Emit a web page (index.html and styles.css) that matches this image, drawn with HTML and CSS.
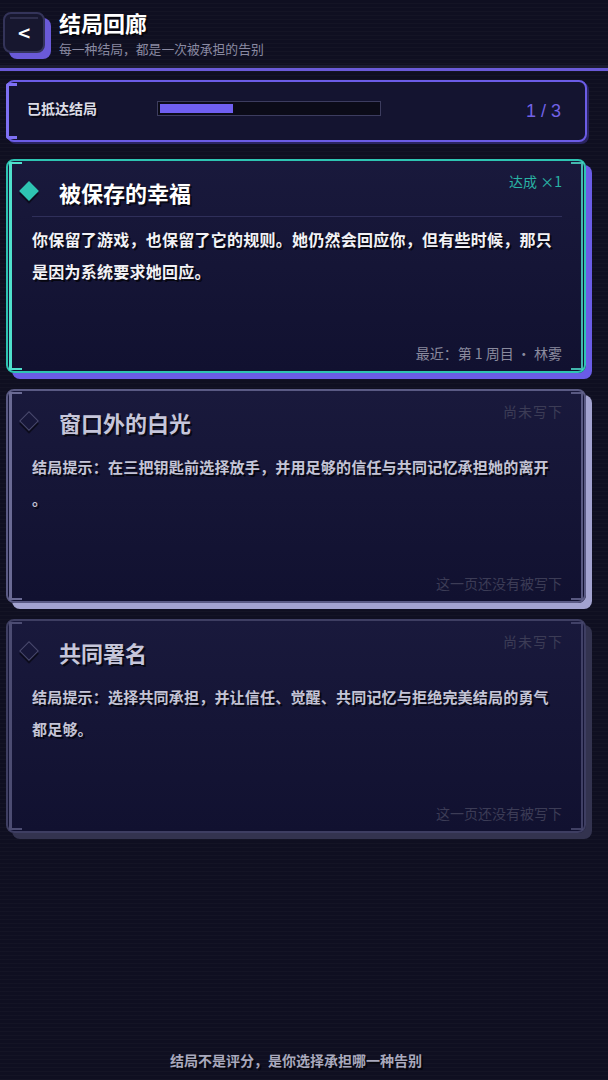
FILE: index.html
```html
<!DOCTYPE html>
<html lang="zh-CN">
<head>
    <meta charset="utf-8">
    <title>结局回廊</title>
    <link rel="stylesheet" href="styles.css">
</head>
<body>
    <div class="page">
        <!-- Top bar -->
        <header class="topbar">
            <button class="back-btn">&lt;</button>
            <div class="titles">
                <h1>结局回廊</h1>
                <p class="subtitle">每一种结局，都是一次被承担的告别</p>
            </div>
        </header>

        <!-- Progress -->
        <div class="progress-card">
            <span class="progress-label">已抵达结局</span>
            <div class="progress-track">
                <div class="progress-fill" style="width: 33.3%;"></div>
            </div>
            <span class="progress-count">1 / 3</span>
        </div>

        <!-- Ending list -->
        <div class="ending-list">
            <div class="ending-card unlocked">
                <div class="card-head">
                    <span class="mark"></span>
                    <h3 class="ending-title">被保存的幸福</h3>
                    <span class="ending-tag">达成 ×1</span>
                </div>
                <div class="divider"></div>
                <p class="ending-text">你保留了游戏，也保留了它的规则。她仍然会回应你，但有些时候，那只是因为系统要求她回应。</p>
                <div class="ending-foot">最近：第 1 周目 · 林雾</div>
            </div>

            <div class="ending-card locked bright">
                <div class="card-head">
                    <span class="mark"></span>
                    <h3 class="ending-title">窗口外的白光</h3>
                    <span class="ending-tag">尚未写下</span>
                </div>
                <p class="ending-text hint">结局提示：在三把钥匙前选择放手，并用足够的信任与共同记忆承担她的离开。</p>
                <div class="ending-foot">这一页还没有被写下</div>
            </div>

            <div class="ending-card locked">
                <div class="card-head">
                    <span class="mark"></span>
                    <h3 class="ending-title">共同署名</h3>
                    <span class="ending-tag">尚未写下</span>
                </div>
                <p class="ending-text hint">结局提示：选择共同承担，并让信任、觉醒、共同记忆与拒绝完美结局的勇气都足够。</p>
                <div class="ending-foot">这一页还没有被写下</div>
            </div>
        </div>

        <p class="page-note">结局不是评分，是你选择承担哪一种告别</p>
    </div>
</body>
</html>
```

FILE: styles.css
```css
body {
    margin: 0;
    background-color: #0f0f21;
    background-image: repeating-linear-gradient(0deg, rgba(255, 255, 255, 0.018) 0 1px, transparent 1px 4px);
    font-family: "Noto Sans CJK SC", "Noto Sans", sans-serif;
    color: #e8e8f0;
}

.page {
    width: 592px;
    height: 1080px;
    display: flex;
    flex-direction: column;
}

/* ---------- top bar ---------- */
.topbar {
    height: 71px;
    flex-shrink: 0;
    box-sizing: border-box;
    padding: 12px 0 0 3px;
    display: flex;
    gap: 14px;
    width: 608px;
    border-bottom: 3px solid #6a5ad8;
    box-shadow: inset 0 -3px 0 #1b1b30;
}

.back-btn {
    width: 42px;
    height: 41px;
    border: 2px solid #34345a;
    border-radius: 8px;
    background: #17172f;
    color: #ffffff;
    font-family: "DejaVu Sans", sans-serif;
    font-size: 17px;
    font-weight: bold;
    padding: 0;
    box-shadow: 6px 6px 0 #6a5ad8;
    position: relative;
}

.back-btn::before {
    content: "";
    position: absolute;
    top: 3px;
    left: 5px;
    right: 5px;
    height: 2px;
    background: #2e2e4c;
}

.titles h1 {
    margin: -3px 0 0 0;
    font-size: 22px;
    line-height: 26px;
    font-weight: bold;
    color: #ffffff;
    text-shadow: 2px 2px 0 rgba(0, 0, 0, 0.6);
}

.subtitle {
    margin: 5px 0 0 0;
    font-size: 12.8px;
    line-height: 18px;
    color: #8a8aa2;
}

/* ---------- progress ---------- */
.progress-card {
    position: relative;
    margin: 9px 5px 0 6px;
    height: 62px;
    flex-shrink: 0;
    box-sizing: border-box;
    border: 2px solid #6b5ce6;
    border-radius: 8px;
    background: #141430;
    display: flex;
    align-items: center;
    padding: 0 24px 6px 19px;
    box-shadow: 2px 2px 0 #2a2460;
}

.progress-card::before {
    content: "";
    position: absolute;
    top: 1px;
    bottom: 1px;
    left: -2px;
    width: 8px;
    border: 3px solid #7e70f4;
    border-right: none;
    border-radius: 3px 0 0 3px;
}

.progress-label {
    width: 130px;
    font-size: 14px;
    font-weight: bold;
    color: #dcdce6;
    text-shadow: 2px 2px 0 rgba(0, 0, 0, 0.6);
}

.progress-track {
    width: 224px;
    height: 15px;
    box-sizing: border-box;
    border: 1px solid #3c3c5e;
    background: #0b0b18;
    padding: 2px;
}

.progress-fill {
    height: 100%;
    background: #6f5ff0;
}

.progress-count {
    margin: 6px 0 0 auto;
    font-family: "Liberation Sans", sans-serif;
    font-size: 18px;
    color: #7262e6;
}

/* ---------- endings ---------- */
.ending-list {
    margin: 17px 0 0 6px;
    display: flex;
    flex-direction: column;
    gap: 16px;
}

.ending-card {
    --line: #2ec4b2;
    --edge: #4fe0cc;
    --shade: #6a5ce6;
    position: relative;
    width: 580px;
    min-height: 214px;
    box-sizing: border-box;
    border: 2px solid var(--line);
    border-radius: 8px;
    background: linear-gradient(180deg, #19193c 0%, #111130 100%);
    box-shadow: 6px 6px 0 var(--shade);
    padding: 10px 22px 8px 12px;
    display: flex;
    flex-direction: column;
}

/* bracket trims inside the frame */
.ending-card::before,
.ending-card::after {
    content: "";
    position: absolute;
    top: 1px;
    bottom: 1px;
    width: 10px;
    border: 2px solid var(--edge);
}

.ending-card::before {
    left: 1px;
    border-right: none;
    border-left-width: 3px;
}

.ending-card::after {
    right: 1px;
    border-left: none;
    opacity: 0.8;
}

.ending-card.locked {
    --line: #3e3e62;
    --edge: #4c4c72;
    --shade: #33334f;
}

.ending-card.locked.bright {
    --line: #5a5a84;
    --edge: #6a6a94;
    --shade: #a3a3d0;
}

.card-head {
    display: flex;
    align-items: flex-start;
}

.mark {
    width: 22px;
    height: 30px;
    margin-top: 6px;
    margin-right: 17px;
    position: relative;
}

.mark::before {
    content: "";
    position: absolute;
    width: 14px;
    height: 14px;
    left: 2px;
    top: 7px;
    transform: rotate(45deg);
    background: #2ec4b2;
    box-shadow: 2px 2px 0 rgba(0, 0, 0, 0.5);
}

.locked .mark::before {
    box-sizing: border-box;
    background: transparent;
    border: 1.5px solid #4a4a6e;
}

.ending-title {
    margin: 6px 0 0 0;
    font-size: 22px;
    line-height: 30px;
    font-weight: bold;
    color: #ffffff;
    text-shadow: 2px 2px 0 rgba(0, 0, 0, 0.65);
}

.locked .ending-title {
    color: #c6c6da;
}

.ending-tag {
    margin-left: auto;
    font-size: 14px;
    line-height: 20px;
    color: #29b3a4;
}

.locked .ending-tag {
    letter-spacing: 1px;
    margin-right: -1px;
    color: #3c3c56;
}

.divider {
    height: 1px;
    margin: 9px 0 0 12px;
    background: #2f2f5a;
}

.ending-text {
    margin: 6px 10px 0 12px;
    font-size: 16px;
    line-height: 32px;
    font-weight: bold;
    letter-spacing: 0.25px;
    color: #f2f2f6;
    text-shadow: 2px 2px 0 rgba(0, 0, 0, 0.7);
}

.ending-text.hint {
    margin-top: 14px;
    font-size: 15px;
    letter-spacing: 0.2px;
    color: #c4c4d6;
    line-break: anywhere;
}

.ending-foot {
    margin-top: auto;
    text-align: right;
    font-size: 14px;
    line-height: 20px;
    color: #8a8a9e;
}

.locked .ending-foot {
    color: #3c3c56;
}

/* ---------- bottom note ---------- */
.page-note {
    margin: auto 0 10px 0;
    text-align: center;
    font-size: 14px;
    line-height: 20px;
    font-weight: bold;
    color: #a9a9bd;
    text-shadow: 2px 2px 0 rgba(0, 0, 0, 0.6);
}
```
